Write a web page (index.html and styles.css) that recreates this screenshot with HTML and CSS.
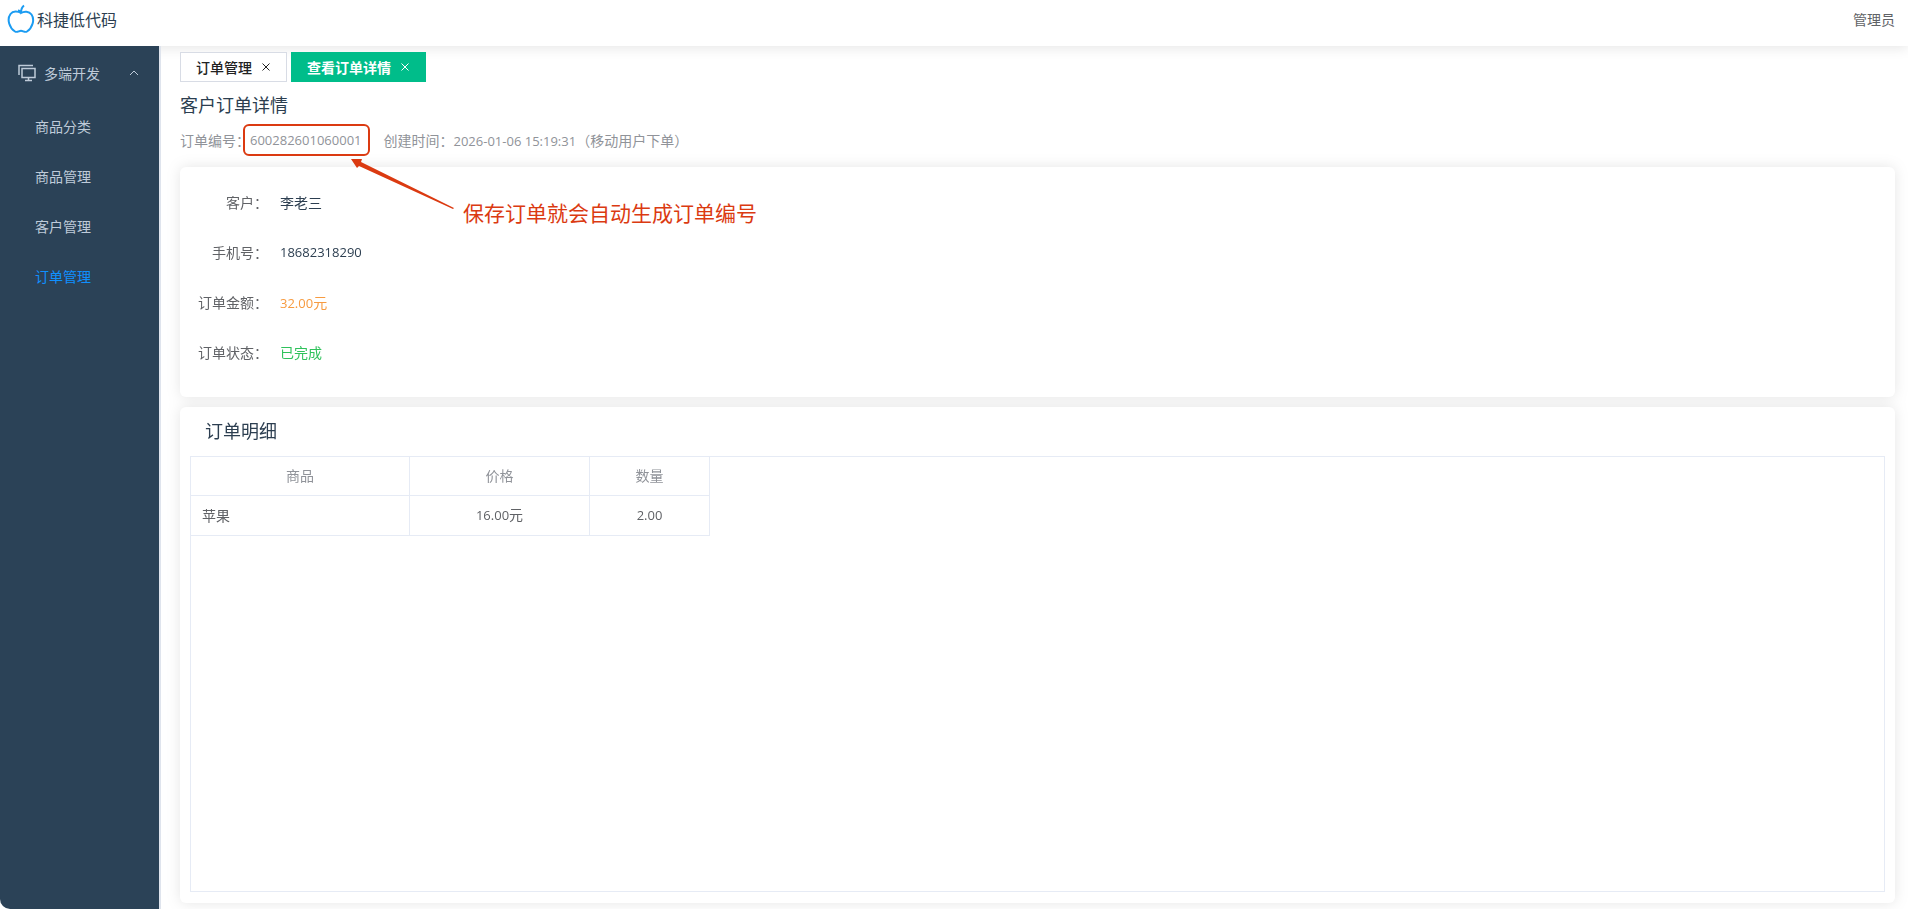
FILE: index.html
```
<!DOCTYPE html>
<html lang="zh-CN">
<head>
    <meta charset="UTF-8">
    <meta name="viewport" content="width=device-width, initial-scale=1.0">
    <title>科捷低代码</title>
    <link rel="stylesheet" href="styles.css">
</head>
<body>
    <header class="header">
        <a class="brand" href="#">
            <svg class="logo" viewBox="0 0 28 30" aria-hidden="true">
                <path d="M14 9C11 7 6 6.500 3.500 10C-0.500 15.500 2.500 24 8 27.500C10 28.800 12 26.800 14 26.800C16 26.800 18 28.800 20 27.500C25.500 24 28 15.500 24.500 10.500C22 7 17 7 14 9C13.500 7.500 12.500 6.500 11 6.500M14 9C14 6 15 3 17 1.500"/>
            </svg>
            <span>科捷低代码</span>
        </a>
        <span class="user">管理员</span>
    </header>

    <div class="layout">
        <!-- 左侧菜单 -->
        <nav class="sidebar">
            <button class="menu-title" type="button">
                <svg class="icon-screen" viewBox="0 0 18 18" aria-hidden="true">
                    <path d="M1 11V1.500H15M4 4.500H17V13.500H4ZM10.500 13.500V16.500M7 16.500H14"/>
                </svg>
                <span>多端开发</span>
                <svg class="icon-arrow" viewBox="0 0 10 6" aria-hidden="true"><path d="M1 5L5 1L9 5"/></svg>
            </button>
            <a class="menu-item" href="#">商品分类</a>
            <a class="menu-item" href="#">商品管理</a>
            <a class="menu-item" href="#">客户管理</a>
            <a class="menu-item active" href="#">订单管理</a>
        </nav>

        <main class="main">
            <div class="tabs">
                <button class="tab" type="button">订单管理
                    <svg class="icon-close" viewBox="0 0 8 8" aria-hidden="true"><path d="M0.500 0.500L7.500 7.500M7.500 0.500L0.500 7.500"/></svg>
                </button>
                <button class="tab active" type="button">查看订单详情
                    <svg class="icon-close" viewBox="0 0 8 8" aria-hidden="true"><path d="M0.500 0.500L7.500 7.500M7.500 0.500L0.500 7.500"/></svg>
                </button>
            </div>

            <h1 class="page-title">客户订单详情</h1>
            <div class="order-meta">
                <span>订单编号：</span>
                <span class="order-no num">600282601060001
                    <!-- 红框标注 -->
                    <span class="mark-box"></span>
                    <svg class="mark-arrow" viewBox="0 0 104 50" aria-hidden="true">
                        <path d="M0 0L11 0L10 3L103 49L102 50L8 7L6 9Z"/>
                    </svg>
                    <span class="mark-text">保存订单就会自动生成订单编号</span>
                </span>
                <span>创建时间：<span class="num">2026-01-06 15:19:31</span>（移动用户下单）</span>
            </div>

            <div class="cards">
                <!-- 订单信息 -->
                <section class="card info">
                    <dl>
                        <div class="row"><dt>客户：</dt><dd>李老三</dd></div>
                        <div class="row"><dt>手机号：</dt><dd class="num">18682318290</dd></div>
                        <div class="row"><dt>订单金额：</dt><dd class="amount"><span class="num">32.00</span>元</dd></div>
                        <div class="row"><dt>订单状态：</dt><dd class="done">已完成</dd></div>
                    </dl>
                </section>

                <!-- 订单明细 -->
                <section class="card detail">
                    <h2 class="detail-title">订单明细</h2>
                    <div class="table-box">
                        <table>
                            <thead>
                                <tr>
                                    <th class="col-name">商品</th>
                                    <th class="col-price">价格</th>
                                    <th class="col-count">数量</th>
                                </tr>
                            </thead>
                            <tbody>
                                <tr>
                                    <td class="left">苹果</td>
                                    <td><span class="num">16.00</span>元</td>
                                    <td><span class="num">2.00</span></td>
                                </tr>
                            </tbody>
                        </table>
                    </div>
                </section>
            </div>
        </main>
    </div>
</body>
</html>
```
FILE: styles.css
```
* {
    box-sizing: border-box;
}

body {
    margin: 0;
    height: 100vh;
    display: flex;
    flex-direction: column;
    font-family: "Noto Sans CJK SC", sans-serif;
    font-size: 14px;
    line-height: 20px;
    color: #2c3e50;
    background-color: #fff;
}

button {
    font-family: inherit;
    font-size: 14px;
    line-height: 20px;
    cursor: pointer;
}

svg {
    fill: none;
    stroke: currentColor;
    flex-shrink: 0;
}

.num {
    font-family: "Open Sans", "Noto Sans", sans-serif;
    font-size: 13px;
}

.header {
    height: 46px;
    padding: 0 13px 8px 7px;
    display: flex;
    align-items: center;
    justify-content: space-between;
    flex-shrink: 0;
    background-color: #fff;
    box-shadow: 0 2px 12px rgba(0, 0, 0, 0.1);
}

.brand {
    display: flex;
    align-items: center;
    gap: 2px;
    font-size: 16px;
    color: #2c3e50;
    text-decoration: none;
}

.logo {
    width: 28px;
    height: 30px;
    color: #1b9cf2;
    stroke-width: 2;
}

.user {
    color: #606266;
}

.layout {
    flex: 1;
    display: flex;
    min-height: 0;
}

.sidebar {
    position: relative;
    width: 161px;
    flex-shrink: 0;
    background-color: #2b4257;
    background-clip: padding-box;
    border-right: 2px solid #dfe4ed;
    border-bottom-left-radius: 10px;
}

.menu-title {
    width: 100%;
    height: 56px;
    padding: 0 20px 2px 18px;
    display: flex;
    align-items: center;
    gap: 8px;
    border: none;
    background: none;
    color: #bfcbd9;
}

.icon-screen {
    width: 18px;
    height: 18px;
    stroke-width: 1.5;
}

.icon-arrow {
    width: 10px;
    height: 6px;
    margin-left: auto;
}

.menu-item {
    display: block;
    padding: 14px 0 16px 35px;
    color: #bfcbd9;
    text-decoration: none;
}

.menu-item.active {
    color: #1090ff;
}

.main {
    flex: 1;
    min-width: 0;
    padding: 6px 13px 6px 19px;
    display: flex;
    flex-direction: column;
}

.tabs {
    display: flex;
    gap: 4px;
}

.tab {
    height: 30px;
    padding: 0 16px 0 15px;
    display: flex;
    align-items: center;
    gap: 10px;
    border: 1px solid #d8dce5;
    background-color: #fff;
    color: #222;
    font-weight: 500;
}

.tab.active {
    border-color: #00bd8a;
    background-color: #00bd8a;
    color: #fff;
    font-weight: 700;
}

.icon-close {
    width: 8px;
    height: 8px;
}

.page-title {
    margin: 10px 0 0;
    font-size: 18px;
    font-weight: 400;
    line-height: 24px;
}

.order-meta {
    height: 20px;
    margin: 14px 0 17px;
    display: flex;
    color: #909399;
}

.order-no {
    position: relative;
    z-index: 1;
    margin-right: 22px;
}

.mark-box {
    position: absolute;
    top: -6px;
    left: -7px;
    width: 127px;
    height: 32px;
    border: 2px solid #db3a11;
    border-radius: 6px;
}

.mark-arrow {
    position: absolute;
    top: 29px;
    left: 101px;
    width: 104px;
    height: 50px;
    fill: #db3a11;
    stroke: none;
}

.mark-text {
    position: absolute;
    top: 68px;
    left: 213px;
    font-family: "Noto Sans CJK SC", sans-serif;
    font-size: 21px;
    line-height: 28px;
    white-space: nowrap;
    color: #db3a11;
}

/* 两张卡片共用一层阴影 */
.cards {
    flex: 1;
    display: flex;
    flex-direction: column;
    gap: 10px;
    filter: drop-shadow(0 0 7px rgba(0, 0, 0, 0.1));
}

.card {
    border-radius: 6px;
    background-color: #fff;
}

.info {
    padding: 19px 0 11px;
}

.info dl {
    margin: 0;
}

.row {
    display: flex;
    height: 32px;
    margin-bottom: 18px;
    line-height: 32px;
}

.row dt {
    width: 100px;
    padding-right: 12px;
    text-align: right;
    color: #606266;
}

.row dd {
    margin: 0;
}

.row .amount {
    color: #f79b40;
}

.row .done {
    color: #2fc25b;
}

.detail {
    flex: 1;
    padding: 11px 10px 11px;
    display: flex;
    flex-direction: column;
}

.detail-title {
    margin: 0 0 14px 15px;
    font-size: 18px;
    font-weight: 400;
    line-height: 24px;
}

.table-box {
    flex: 1;
    border: 1px solid #e6ebf5;
}

table {
    table-layout: fixed;
    width: 519px;
    border-collapse: separate;
    border-spacing: 0;
}

th,
td {
    height: 40px;
    padding: 0 11px 2px;
    border-right: 1px solid #e6ebf5;
    border-bottom: 1px solid #e6ebf5;
    text-align: center;
    color: #606266;
}

th {
    height: 39px;
    font-weight: 400;
    color: #909399;
}

.left {
    text-align: left;
}

.col-name {
    width: 219px;
}

.col-price {
    width: 180px;
}

.col-count {
    width: 120px;
}
```
